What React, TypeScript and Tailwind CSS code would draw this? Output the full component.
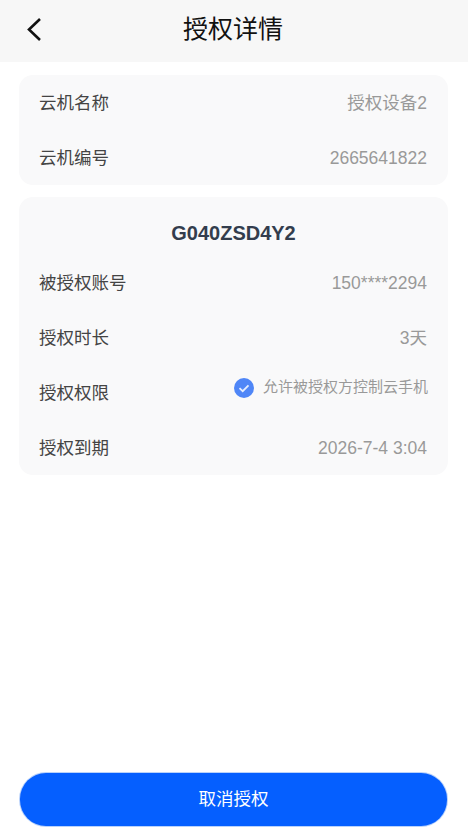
import type { ReactNode } from "react";

const FONT = "font-['Liberation_Sans','Noto_Sans_CJK_SC',sans-serif]";

function Row({ label, children }: { label: string; children: ReactNode }) {
  return (
    <div className="flex h-[55px] items-center justify-between pl-5 pr-5 pt-[2px]">
      <span className="text-[17.5px] text-[#444444]">{label}</span>
      {children}
    </div>
  );
}

function Value({ children }: { children: ReactNode }) {
  return <span className="mr-[1px] text-[17.5px] text-[#999999]">{children}</span>;
}

export default function App() {
  return (
    <div className={`${FONT} flex h-[834px] w-[468px] flex-col bg-white`}>
      <header className="relative flex h-[62px] shrink-0 items-center justify-center bg-[#f7f7f7] pb-[3px] pr-[2px]">
        <button className="absolute left-[26px] top-[17px]">
          <svg width="16" height="24" viewBox="0 0 16 24" fill="none">
            <path d="M14 2 3 12.5 14 23" stroke="#111" strokeWidth="2.6" />
          </svg>
        </button>
        <h1 className="text-[25px] font-normal text-[#111111]">授权详情</h1>
      </header>

      <section className="ml-[19px] mr-5 mt-[13px] rounded-[14px] bg-[#f9f9fa]">
        <Row label="云机名称">
          <Value>授权设备2</Value>
        </Row>
        <Row label="云机编号">
          <Value>2665641822</Value>
        </Row>
      </section>

      <section className="ml-[19px] mr-5 mt-3 rounded-[14px] bg-[#f9f9fa]">
        <h2 className="flex h-[58px] items-end justify-center pb-[7px] text-[20px] font-bold text-[#333d4d]">
          G040ZSD4Y2
        </h2>
        <Row label="被授权账号">
          <Value>150****2294</Value>
        </Row>
        <Row label="授权时长">
          <Value>3天</Value>
        </Row>
        <Row label="授权权限">
          <div className="mb-[12px] flex items-center gap-[9px]">
            <svg width="20" height="20" viewBox="0 0 20 20" fill="none">
              <circle cx="10" cy="10" r="10" fill="#4f86f7" />
              <path d="M5.5 10.2 8.7 13.2 14.5 7.3" stroke="#e4edff" strokeWidth="1.8" />
            </svg>
            <span className="text-[15px] text-[#999999]">允许被授权方控制云手机</span>
          </div>
        </Row>
        <Row label="授权到期">
          <Value>2026-7-4 3:04</Value>
        </Row>
      </section>

      <div className="mt-auto pb-[8px] pl-5 pr-[21px]">
        <button className="flex h-[53px] w-full items-center justify-center rounded-[26px] bg-[#055fff] text-[17.5px] text-white shadow-[0_0_0_1px_#b9d2fb]">
          取消授权
        </button>
      </div>
    </div>
  );
}
